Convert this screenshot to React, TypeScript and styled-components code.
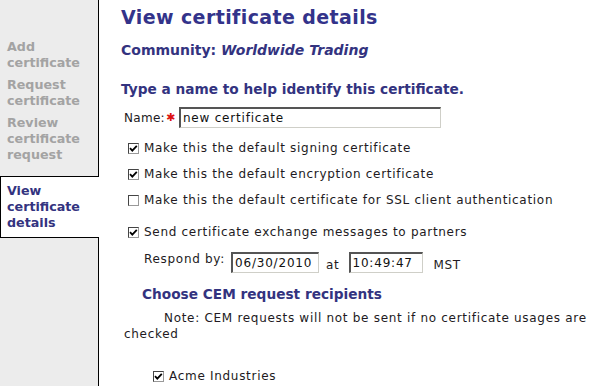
import React from 'react';
import styled, { createGlobalStyle } from 'styled-components';

const GlobalStyle = createGlobalStyle`
  html, body {
    margin: 0;
    padding: 0;
    background: #ffffff;
  }
  body {
    font-family: "DejaVu Sans", Verdana, sans-serif;
    font-size: 12px;
    letter-spacing: 0.7px;
    color: #221a22;
  }
`;

const Page = styled.div`
  display: flex;
  width: 593px;
  height: 386px;
  overflow: hidden;
`;

const Sidebar = styled.nav`
  width: 98px;
  flex: 0 0 98px;
  background: #ececec;
  border-right: 1px solid #000;
  padding-top: 39px;
  display: flex;
  flex-direction: column;
  gap: 6px;
`;

const NavItem = styled.div<{ $active?: boolean }>`
  font-weight: bold;
  font-size: 12.7px;
  letter-spacing: 0;
  line-height: 16px;
  padding: ${p => (p.$active ? '6px 0 6px 6px' : '0 0 0 7px')};
  color: ${p => (p.$active ? '#33337f' : '#a3a3a3')};
  background: ${p => (p.$active ? '#fff' : 'transparent')};
  border: ${p => (p.$active ? '1px solid #000' : 'none')};
  border-right: none;
  margin-right: ${p => (p.$active ? '-1px' : '0')};
  margin-top: ${p => (p.$active ? '7px' : '0')};
`;

const Main = styled.main`
  flex: 1;
  padding: 5px 0 0 22px;
`;

const Title = styled.h1`
  margin: 0;
  font-size: 19px;
  letter-spacing: 0.4px;
  line-height: 24px;
  font-weight: bold;
  color: #33338a;
`;

const Community = styled.div`
  margin-top: 13px;
  font-size: 14px;
  letter-spacing: 0;
  line-height: 16px;
  font-weight: bold;
  color: #33337f;

  em {
    font-style: italic;
  }
`;

const SectionHeading = styled.h2<{ $indent?: number; $gapTop: number }>`
  margin: ${p => p.$gapTop}px 0 0 0;
  font-size: 13.7px;
  letter-spacing: 0;
  line-height: 16px;
  font-weight: bold;
  color: #33337f;
  padding-left: ${p => p.$indent ?? 0}px;
`;

const NameRow = styled.div`
  display: flex;
  align-items: center;
  padding-left: 3px;
  margin-top: 10px;
  height: 21px;
`;

const Label = styled.span`
  line-height: 16px;
  letter-spacing: 0.3px;
`;

const Required = styled.span`
  color: #d11;
  margin: 0 3px 0 1px;
  font-size: 11px;
`;

const TextBox = styled.div<{ $width: number; $gapLeft?: number }>`
  box-sizing: border-box;
  width: ${p => p.$width}px;
  height: 21px;
  margin-left: ${p => p.$gapLeft ?? 0}px;
  border-top: 2px solid #555;
  border-left: 2px solid #555;
  border-right: 1px solid #cfcfc8;
  border-bottom: 1px solid #cfcfc8;
  padding-left: 2px;
  display: flex;
  align-items: center;
  background: #fff;
  color: #111;
  font-size: 12px;
  letter-spacing: 0.8px;
`;

const CheckRow = styled.label<{ $gapTop: number; $indent?: number }>`
  display: flex;
  align-items: center;
  gap: 5px;
  margin-top: ${p => p.$gapTop}px;
  padding-left: ${p => p.$indent ?? 7}px;
  line-height: 16px;
`;

const Box = styled.span`
  box-sizing: border-box;
  flex: 0 0 11px;
  width: 11px;
  height: 11px;
  border: 1px solid #444;
  border-right-color: #999;
  border-bottom-color: #999;
  background: #fff;
  display: inline-flex;
  align-items: center;
  justify-content: center;
`;

const RespondRow = styled.div`
  display: flex;
  align-items: flex-start;
  padding-left: 23px;
  margin-top: 12px;
  height: 21px;
`;

const RespondLabel = styled.span`
  line-height: 16px;
  margin-top: -1px;
`;

const Between = styled.span<{ $left: number; $right: number }>`
  margin: 0 ${p => p.$right}px 0 ${p => p.$left}px;
  line-height: 16px;
  padding-top: 5px;
`;

const Note = styled.p`
  margin: 8px 0 0 3px;
  text-indent: 40px;
  line-height: 16px;
`;

function Checkbox({ checked }: { checked?: boolean }) {
  return (
    <Box>
      {checked && (
        <svg width="9" height="9" viewBox="0 0 9 9">
          <path d="M1 4.2 L3.3 6.6 L7.8 1.8" stroke="#000" strokeWidth="1.8" fill="none" />
        </svg>
      )}
    </Box>
  );
}

export default function App() {
  return (
    <>
      <GlobalStyle />
      <Page>
        <Sidebar>
          <NavItem>Add<br />certificate</NavItem>
          <NavItem>Request<br />certificate</NavItem>
          <NavItem>Review<br />certificate<br />request</NavItem>
          <NavItem $active>View<br />certificate<br />details</NavItem>
        </Sidebar>
        <Main>
          <Title>View certificate details</Title>
          <Community>Community: <em>Worldwide Trading</em></Community>
          <SectionHeading $gapTop={23}>Type a name to help identify this certificate.</SectionHeading>
          <NameRow>
            <Label>Name:</Label>
            <Required>✱</Required>
            <TextBox $width={262}>new certificate</TextBox>
          </NameRow>
          <CheckRow $gapTop={12}><Checkbox checked />Make this the default signing certificate</CheckRow>
          <CheckRow $gapTop={10}><Checkbox checked />Make this the default encryption certificate</CheckRow>
          <CheckRow $gapTop={10}><Checkbox />Make this the default certificate for SSL client authentication</CheckRow>
          <CheckRow $gapTop={16}><Checkbox checked />Send certificate exchange messages to partners</CheckRow>
          <RespondRow>
            <RespondLabel>Respond by:</RespondLabel>
            <TextBox $width={88} $gapLeft={6}>06/30/2010</TextBox>
            <Between $left={7} $right={9}>at</Between>
            <TextBox $width={74}>10:49:47</TextBox>
            <Between $left={11} $right={0}>MST</Between>
          </RespondRow>
          <SectionHeading $indent={21} $gapTop={13}>Choose CEM request recipients</SectionHeading>
          <Note>Note: CEM requests will not be sent if no certificate usages are checked</Note>
          <CheckRow $gapTop={26} $indent={32}><Checkbox checked />Acme Industries</CheckRow>
        </Main>
      </Page>
    </>
  );
}
